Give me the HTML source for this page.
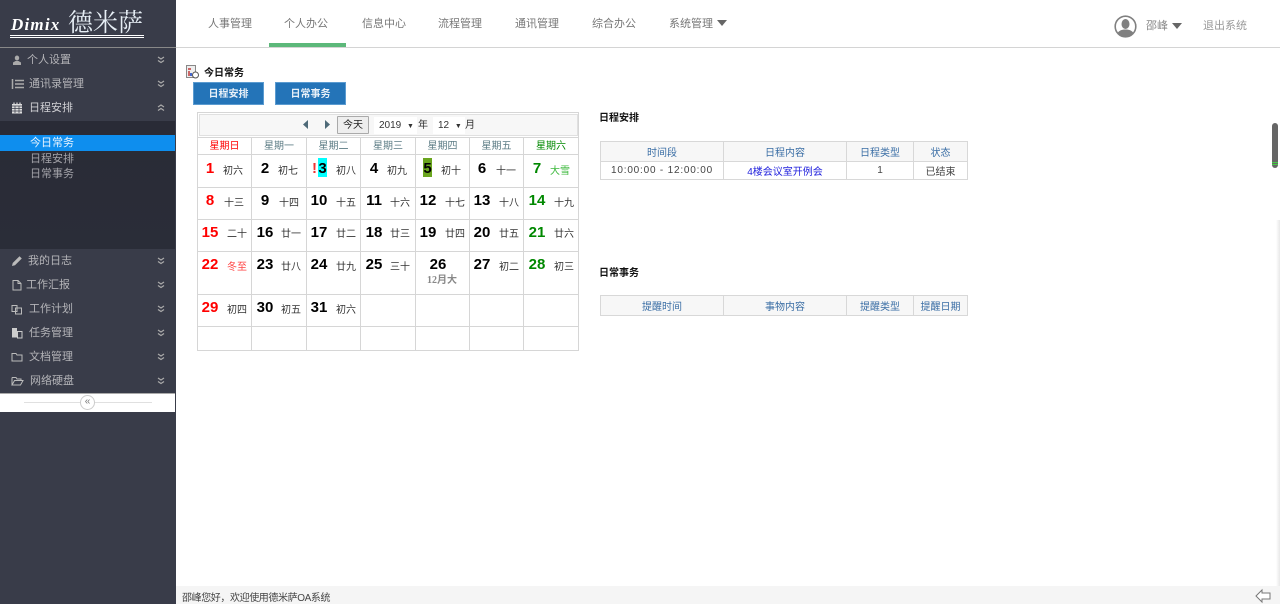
<!DOCTYPE html>
<html lang="zh"><head><meta charset="utf-8"><title>今日常务</title>
<style>
*{box-sizing:border-box}
html,body{margin:0;padding:0;width:1280px;height:604px;overflow:hidden;background:#fff;font-family:"Liberation Sans","Noto Sans CJK SC",sans-serif;font-size:11px;color:#333}
body{filter:blur(.3px)}
.a{position:absolute;white-space:nowrap}
#side{position:absolute;left:0;top:0;width:176px;height:604px;background:#393c49}
.m{position:absolute;left:0;width:175px;height:24px;line-height:25px;color:#b4b4b8;font-size:11px}
.m svg{position:absolute;left:11px;top:6px}
.m svg.c{left:157px;top:8px}
.m span{position:absolute;top:0;white-space:nowrap}
.n{position:absolute;top:1px;height:47px;line-height:46px;font-size:11px;color:#777;white-space:nowrap}
#cal{position:absolute;left:197px;top:112px;width:382px;height:239px;border:1px solid #d6d6d6}
.v{position:absolute;top:25px;bottom:0;width:1px;background:#d6d6d6}
.h{position:absolute;left:0;right:0;height:1px;background:#d6d6d6}
.w{position:absolute;top:25px;height:17px;line-height:17px;text-align:center;font-size:10px;color:#5b7b84;white-space:nowrap}
.d{position:absolute;width:26px;height:18px;line-height:18px;text-align:center;font-weight:bold;font-size:15px;color:#000}
.l{position:absolute;width:24px;height:14px;line-height:14px;text-align:center;font-size:10px;color:#333;white-space:nowrap}
.r{color:#f00}.g{color:#080}
table.t{position:absolute;left:600px;border-collapse:collapse;table-layout:fixed;width:367px;font-size:10px}
table.t td,table.t th{border:1px solid #d8d8d8;padding:0;text-align:center;font-weight:normal;overflow:hidden;white-space:nowrap}
table.t th{background:#f7f7f7;color:#3a6ea5;height:20px}
table.t td{height:18px;color:#444}
.btn{position:absolute;top:82px;width:71px;height:23px;line-height:23px;background:#2474b8;border:1px solid #5b9bd0;color:#e8f0f8;font-weight:bold;text-align:center;font-size:10px}
.sec{position:absolute;left:599px;font-size:10px;font-weight:bold;color:#111;white-space:nowrap;line-height:12px}
</style></head><body>

<div id="side">
  <div class="a" style="left:10px;top:35px;width:134px;height:3px;border-top:1px solid #fff;border-bottom:1px solid #fff"></div>
  <div class="a" style="left:11px;top:15px;font:italic bold 17px 'Liberation Serif',serif;color:#fff;line-height:20px;letter-spacing:1.2px">Dimix</div>
  <div class="a" style="left:68px;top:8px;font:25px/27px 'Noto Serif CJK SC',serif;color:#e6eef5">德米萨</div>
  <div class="a" style="left:0;top:47px;width:176px;height:1px;background:#888"></div>

  <div class="m" style="top:48px"><svg width="12" height="12" viewBox="0 0 12 12"><path d="M6 1.500a2.200 2.500 0 1 1-.01 0M2 11V8.500L4.500 7h3L10 8.500V11z" fill="#aaa"/></svg><span style="left:27px">个人设置</span><svg class="c" width="8" height="8" viewBox="0 0 8 8"><path d="M1 1l3 2 3-2M1 4.500l3 2 3-2" fill="none" stroke="#aaa" stroke-width="1.200"/></svg></div>
  <div class="m" style="top:72px"><svg width="14" height="12" viewBox="0 0 14 12"><path d="M1.500 1v10M4 2.500h9M4 6h9M4 9.500h9" stroke="#aaa" stroke-width="1.500" fill="none"/></svg><span style="left:29px">通讯录管理</span><svg class="c" width="8" height="8" viewBox="0 0 8 8"><path d="M1 1l3 2 3-2M1 4.500l3 2 3-2" fill="none" stroke="#aaa" stroke-width="1.200"/></svg></div>
  <div class="m" style="top:96px;color:#d0d0d4"><svg width="12" height="12" viewBox="0 0 12 12"><path d="M1 2h10v9.500H1z" fill="#ddd"/><path d="M3 .5v2.500M6 .5v2.500M9 .5v2.500" stroke="#ddd" stroke-width="1.200"/><path d="M1 4h10M1 6.500h10M1 9h10M4 4v7M8 4v7" stroke="#393c49" stroke-width=".7"/></svg><span style="left:29px">日程安排</span><svg class="c" width="8" height="8" viewBox="0 0 8 8"><path d="M1 3l3-2 3 2M1 6.500l3-2 3 2" fill="none" stroke="#aaa" stroke-width="1.200"/></svg></div>

  <div class="a" style="left:0;top:121px;width:175px;height:128px;background:linear-gradient(#292b36,#2a2d38)"></div>
  <div class="a" style="left:0;top:135px;width:175px;height:16px;background:#0e8eee;color:#e8f4ff;line-height:16px;padding-left:30px">今日常务</div>
  <div class="a" style="left:30px;top:152px;line-height:15px;color:#a2a2a8">日程安排</div>
  <div class="a" style="left:30px;top:167px;line-height:15px;color:#a2a2a8">日常事务</div>

  <div class="m" style="top:249px"><svg width="12" height="12" viewBox="0 0 12 12"><path d="M1 11l.7-3L8.500 1.200l2.300 2.300L4 10.300z" fill="#bbb"/></svg><span style="left:28px">我的日志</span><svg class="c" width="8" height="8" viewBox="0 0 8 8"><path d="M1 1l3 2 3-2M1 4.500l3 2 3-2" fill="none" stroke="#aaa" stroke-width="1.200"/></svg></div>
  <div class="m" style="top:273px"><svg width="12" height="12" viewBox="0 0 12 12"><path d="M2 1.500h5l3 3V11H2z M7 1.500v3h3" fill="none" stroke="#bbb"/></svg><span style="left:26px">工作汇报</span><svg class="c" width="8" height="8" viewBox="0 0 8 8"><path d="M1 1l3 2 3-2M1 4.500l3 2 3-2" fill="none" stroke="#aaa" stroke-width="1.200"/></svg></div>
  <div class="m" style="top:297px"><svg width="12" height="12" viewBox="0 0 12 12"><path d="M1 2.500h5v6H1z M4.500 5h6v6h-6z" fill="none" stroke="#bbb"/></svg><span style="left:29px">工作计划</span><svg class="c" width="8" height="8" viewBox="0 0 8 8"><path d="M1 1l3 2 3-2M1 4.500l3 2 3-2" fill="none" stroke="#aaa" stroke-width="1.200"/></svg></div>
  <div class="m" style="top:321px"><svg width="12" height="12" viewBox="0 0 12 12"><path d="M1 1h5v9.500H1z" fill="#ccc"/><path d="M6.500 4.500H11V11H6.500z" fill="none" stroke="#ccc"/></svg><span style="left:29px">任务管理</span><svg class="c" width="8" height="8" viewBox="0 0 8 8"><path d="M1 1l3 2 3-2M1 4.500l3 2 3-2" fill="none" stroke="#aaa" stroke-width="1.200"/></svg></div>
  <div class="m" style="top:345px"><svg width="12" height="12" viewBox="0 0 12 12"><path d="M1 2.500h4l1 1.500h5v6H1z" fill="none" stroke="#bbb"/></svg><span style="left:29px">文档管理</span><svg class="c" width="8" height="8" viewBox="0 0 8 8"><path d="M1 1l3 2 3-2M1 4.500l3 2 3-2" fill="none" stroke="#aaa" stroke-width="1.200"/></svg></div>
  <div class="m" style="top:369px"><svg width="13" height="12" viewBox="0 0 13 12"><path d="M1 2.500h4l1 1.500h4v1.500M1 10V2.500M1 10l2.500-4.500H12L9.500 10z" fill="none" stroke="#bbb"/></svg><span style="left:30px">网络硬盘</span><svg class="c" width="8" height="8" viewBox="0 0 8 8"><path d="M1 1l3 2 3-2M1 4.500l3 2 3-2" fill="none" stroke="#aaa" stroke-width="1.200"/></svg></div>

  <div class="a" style="left:0;top:393px;width:175px;height:19px;background:#fff;border-top:1px solid #aaa"></div>
  <div class="a" style="left:24px;top:402px;width:128px;height:1px;background:#e0e0e0"></div>
  <div class="a" style="left:80px;top:395px;width:15px;height:15px;border-radius:50%;background:#fff;border:1px solid #ccc;text-align:center;line-height:12px;font-size:10px;color:#777">«</div>
</div>

<div class="a" style="left:176px;top:47px;width:1104px;height:1px;background:#d4d4d4"></div>
<div class="a" style="left:269px;top:43px;width:77px;height:4px;background:#5cb87a"></div>
<div class="n" style="left:208px">人事管理</div>
<div class="n" style="left:284px">个人办公</div>
<div class="n" style="left:362px">信息中心</div>
<div class="n" style="left:438px">流程管理</div>
<div class="n" style="left:515px">通讯管理</div>
<div class="n" style="left:592px">综合办公</div>
<div class="n" style="left:669px">系统管理</div>
<svg class="a" style="left:717px;top:20px" width="10" height="6" viewBox="0 0 10 6"><path d="M0 0h10L5 6z" fill="#666"/></svg>

<svg class="a" style="left:1114px;top:15px" width="23" height="23" viewBox="0 0 23 23"><circle cx="11.500" cy="11.500" r="10.300" fill="#fff" stroke="#808080" stroke-width="1.600"/><ellipse cx="11.500" cy="9" rx="4" ry="5" fill="#808080"/><path d="M3.500 18c2-3 5-3.500 8-3.500s6 .5 8 3.500c-2 2.500-5 3.800-8 3.800s-6-1.300-8-3.800z" fill="#808080"/></svg>
<div class="n" style="left:1146px;top:3px;color:#888">邵峰</div>
<svg class="a" style="left:1172px;top:23px" width="10" height="6" viewBox="0 0 10 6"><path d="M0 0h10L5 6z" fill="#666"/></svg>
<div class="n" style="left:1203px;top:3px;color:#999">退出系统</div>

<svg class="a" style="left:186px;top:65px" width="13" height="14" viewBox="0 0 13 14"><path d="M.5.500h9v12h-9z" fill="#eee" stroke="#888"/><path d="M2 3h3v2H2zM2 6h2v5H2z" fill="#c66"/><path d="M4 8h2v3H4z" fill="#46c"/><circle cx="9.500" cy="10" r="3" fill="#fff" stroke="#555"/></svg>
<div class="a" style="left:204px;top:67px;font-size:10px;font-weight:bold;color:#111;line-height:13px">今日常务</div>
<div class="btn" style="left:193px">日程安排</div>
<div class="btn" style="left:275px">日常事务</div>

<div id="cal">
  <div class="a" style="left:1px;top:1px;width:379px;height:22px;background:#f7f7f7;border:1px solid #e0e0e0"></div>
  <svg class="a" style="left:104px;top:7px" width="30" height="9" viewBox="0 0 30 9"><path d="M6 0v9L1 4.500z" fill="#4e6a78"/><path d="M23 0v9l5-4.500z" fill="#4e6a78"/></svg>
  <div class="a" style="left:139px;top:3px;width:32px;height:18px;line-height:17px;border:1px solid #aaa;background:#eee;text-align:center;font-size:10px;color:#222;border-radius:1px">今天</div>
  <div class="a" style="left:176px;top:4px;width:43px;height:17px;line-height:18px;background:#fff;font-size:10px;padding-left:5px;color:#333">2019 <span style="font-size:7px;margin-left:3px">▼</span></div>
  <div class="a" style="left:220px;top:4px;line-height:18px;font-size:10px;color:#333">年</div>
  <div class="a" style="left:235px;top:4px;width:32px;height:17px;line-height:18px;background:#fff;font-size:10px;padding-left:5px;color:#333">12 <span style="font-size:7px;margin-left:3px">▼</span></div>
  <div class="a" style="left:267px;top:4px;line-height:18px;font-size:10px;color:#333">月</div>

  <div class="h" style="top:24px"></div><div class="h" style="top:41px"></div><div class="h" style="top:74px"></div><div class="h" style="top:106px"></div><div class="h" style="top:138px"></div><div class="h" style="top:181px"></div><div class="h" style="top:213px"></div>
  <div class="v" style="left:53px"></div><div class="v" style="left:108px"></div><div class="v" style="left:162px"></div><div class="v" style="left:217px"></div><div class="v" style="left:271px"></div><div class="v" style="left:325px"></div>

  <div class="w r" style="left:0;width:53px">星期日</div><div class="w" style="left:54px;width:54px">星期一</div><div class="w" style="left:109px;width:53px">星期二</div><div class="w" style="left:163px;width:54px">星期三</div><div class="w" style="left:218px;width:53px">星期四</div><div class="w" style="left:272px;width:53px">星期五</div><div class="w g" style="left:326px;width:54px">星期六</div>

  <!-- row 1 -->
  <div class="d r" style="left:-1px;top:47px">1</div><div class="l" style="left:23px;top:52px">初六</div>
  <div class="d" style="left:54px;top:47px">2</div><div class="l" style="left:78px;top:52px">初七</div>
  <div class="a" style="left:114px;top:47px;font-weight:bold;font-size:15px;line-height:18px;color:#e33">!</div><div class="a" style="left:120px;top:45px;width:9px;height:19px;background:#0ff"></div><div class="d" style="left:111.500px;top:47px">3</div><div class="l" style="left:136px;top:52px">初八</div>
  <div class="d" style="left:163px;top:47px">4</div><div class="l" style="left:187px;top:52px">初九</div>
  <div class="a" style="left:225px;top:45px;width:9px;height:19px;background:#6aa51e"></div><div class="d" style="left:216.500px;top:47px">5</div><div class="l" style="left:241px;top:52px">初十</div>
  <div class="d" style="left:271px;top:47px">6</div><div class="l" style="left:296px;top:52px">十一</div>
  <div class="d g" style="left:326px;top:47px">7</div><div class="l" style="left:350px;top:52px;color:#3cb83c">大雪</div>
  <!-- row 2 -->
  <div class="d r" style="left:-1px;top:79px">8</div><div class="l" style="left:24px;top:84px">十三</div>
  <div class="d" style="left:54px;top:79px">9</div><div class="l" style="left:79px;top:84px">十四</div>
  <div class="d" style="left:108px;top:79px">10</div><div class="l" style="left:136px;top:84px">十五</div>
  <div class="d" style="left:163px;top:79px">11</div><div class="l" style="left:190px;top:84px">十六</div>
  <div class="d" style="left:217px;top:79px">12</div><div class="l" style="left:245px;top:84px">十七</div>
  <div class="d" style="left:271px;top:79px">13</div><div class="l" style="left:299px;top:84px">十八</div>
  <div class="d g" style="left:326px;top:79px">14</div><div class="l" style="left:354px;top:84px">十九</div>
  <!-- row 3 -->
  <div class="d r" style="left:-1px;top:111px">15</div><div class="l" style="left:27px;top:115px">二十</div>
  <div class="d" style="left:54px;top:111px">16</div><div class="l" style="left:81px;top:115px">廿一</div>
  <div class="d" style="left:108px;top:111px">17</div><div class="l" style="left:136px;top:115px">廿二</div>
  <div class="d" style="left:163px;top:111px">18</div><div class="l" style="left:190px;top:115px">廿三</div>
  <div class="d" style="left:217px;top:111px">19</div><div class="l" style="left:245px;top:115px">廿四</div>
  <div class="d" style="left:271px;top:111px">20</div><div class="l" style="left:299px;top:115px">廿五</div>
  <div class="d g" style="left:326px;top:111px">21</div><div class="l" style="left:354px;top:115px">廿六</div>
  <!-- row 4 -->
  <div class="d r" style="left:-1px;top:143px">22</div><div class="l" style="left:27px;top:148px;color:#f44">冬至</div>
  <div class="d" style="left:54px;top:143px">23</div><div class="l" style="left:81px;top:148px">廿八</div>
  <div class="d" style="left:108px;top:143px">24</div><div class="l" style="left:136px;top:148px">廿九</div>
  <div class="d" style="left:163px;top:143px">25</div><div class="l" style="left:190px;top:148px">三十</div>
  <div class="d" style="left:227px;top:143px">26</div><div class="a" style="left:229px;top:161px;font:bold 10px/14px 'Liberation Serif','Noto Sans CJK SC',serif;color:#888">12月大</div>
  <div class="d" style="left:271px;top:143px">27</div><div class="l" style="left:299px;top:148px">初二</div>
  <div class="d g" style="left:326px;top:143px">28</div><div class="l" style="left:354px;top:148px">初三</div>
  <!-- row 5 -->
  <div class="d r" style="left:-1px;top:186px">29</div><div class="l" style="left:27px;top:191px">初四</div>
  <div class="d" style="left:54px;top:186px">30</div><div class="l" style="left:81px;top:191px">初五</div>
  <div class="d" style="left:108px;top:186px">31</div><div class="l" style="left:136px;top:191px">初六</div>
</div>

<div class="sec" style="top:113px">日程安排</div>
<table class="t" style="top:141px"><colgroup><col style="width:123px"><col style="width:123px"><col style="width:67px"><col style="width:54px"></colgroup>
<tr><th>时间段</th><th>日程内容</th><th>日程类型</th><th>状态</th></tr>
<tr><td style="letter-spacing:.8px">10:00:00 - 12:00:00</td><td style="color:#2222dd">4楼会议室开例会</td><td>1</td><td>已结束</td></tr></table>

<div class="sec" style="top:268px">日常事务</div>
<table class="t" style="top:295px"><colgroup><col style="width:123px"><col style="width:123px"><col style="width:67px"><col style="width:54px"></colgroup>
<tr><th>提醒时间</th><th>事物内容</th><th>提醒类型</th><th>提醒日期</th></tr></table>

<div class="a" style="left:1272px;top:123px;width:6px;height:45px;background:#666;border-radius:3px"></div>
<div class="a" style="left:1272px;top:162px;width:6px;height:1px;background:#4c4"></div>
<div class="a" style="left:1272px;top:164px;width:6px;height:1px;background:#4c4"></div>
<div class="a" style="left:1276px;top:220px;width:4px;height:366px;background:linear-gradient(to right,#fff,#e8e8e8)"></div>

<div class="a" style="left:176px;top:586px;width:1104px;height:18px;background:#f5f5f5"></div>
<div class="a" style="left:182px;top:591px;font-size:10px;line-height:15px;color:#444;letter-spacing:-.4px">邵峰您好，欢迎使用德米萨OA系统</div>
<svg class="a" style="left:1255px;top:588px" width="16" height="16" viewBox="0 0 16 16"><path d="M1 8l6-6v3h8v6H7v3z" fill="#fff" stroke="#777"/></svg>
</body></html>
